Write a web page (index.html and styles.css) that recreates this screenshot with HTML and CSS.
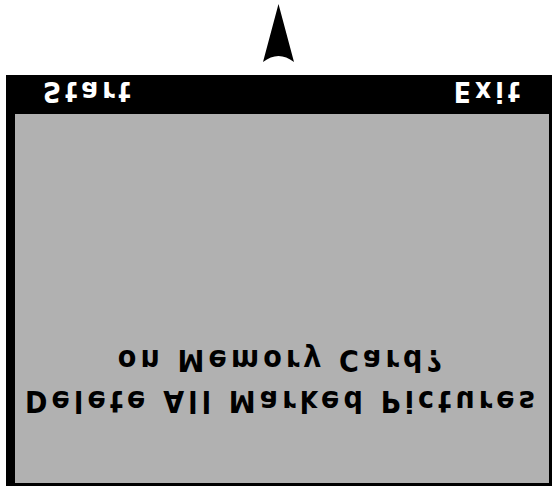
FILE: index.html
```html
<!DOCTYPE html>
<html lang="en">
<head>
    <meta charset="UTF-8">
    <meta name="viewport" content="width=device-width, initial-scale=1.0">
    <title>Delete Marked Pictures</title>
    <link rel="stylesheet" href="styles.css">
</head>
<body>
    <div class="panel">
        <div class="screen">
            <div class="message">
                <p>Delete All Marked Pictures</p>
                <p>on Memory Card?</p>
            </div>

            <!-- Soft key labels -->
            <div class="softkeys">
                <span>Start</span>
                <span>Exit</span>
            </div>
        </div>

        <!-- Scroll arrow -->
        <svg class="arrow" width="32" height="58" viewBox="0 0 32 58">
            <path d="M0 0 Q15.5 12 31 0 L15.5 58 Z" fill="#000"/>
        </svg>
    </div>
</body>
</html>
```

FILE: styles.css
```css
/* Global Styles */
body {
    margin: 0;
    padding: 0;
    background: #fff;
    font-family: "DejaVu Sans Condensed", "DejaVu Sans", sans-serif;
    font-weight: bold;
}

/* Panel is drawn the right way up, then flipped */
.panel {
    width: 559px;
    height: 492px;
    box-sizing: border-box;
    padding: 6px 7px 0 6px;
    display: flex;
    flex-direction: column;
    align-items: center;
    transform: scaleY(-1);
}

/* Screen */
.screen {
    width: 546px;
    height: 411px;
    box-sizing: border-box;
    padding: 3px 3px 0 9px;
    background: #000;
    display: flex;
    flex-direction: column;
}

.message {
    flex: 1;
    background: #b1b1b1;
    padding-top: 61px;
    text-align: center;
    color: #000;
    font-size: 30px;
    line-height: 41px;
    letter-spacing: 4.2px;
}

.message p {
    margin: 0;
}

/* Soft keys */
.softkeys {
    height: 39px;
    box-sizing: border-box;
    padding: 0 25px 4px 28px;
    display: flex;
    justify-content: space-between;
    align-items: flex-end;
    color: #fff;
    font-size: 28px;
    line-height: 24px;
    letter-spacing: 4px;
}

/* Arrow */
.arrow {
    display: block;
    margin-top: 13px;
}
```
